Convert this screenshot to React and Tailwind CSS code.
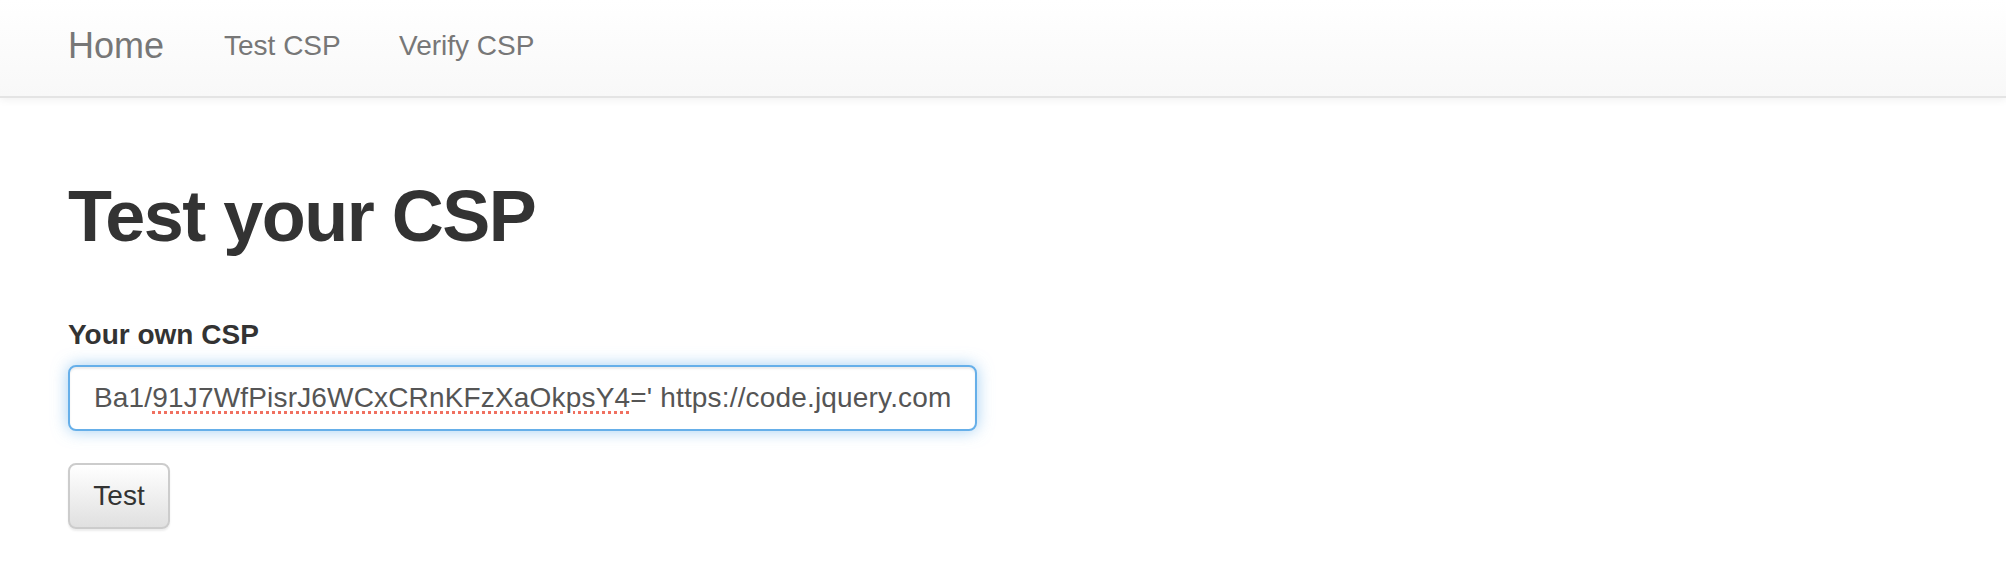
import React from 'react';

const font = { fontFamily: '"Liberation Sans", Arial, sans-serif' };

function Navbar() {
    return (
        <nav className="h-[98px] bg-gradient-to-b from-white to-[#f8f8f8] border-b-2 border-[#e4e4e4] shadow-[0_2px_8px_rgba(0,0,0,0.06)]">
            <div className="flex items-start pl-[68px] pt-[26px]">
                <a className="w-[156px] text-[36px] leading-[40px] text-[#777]">Home</a>
                <a className="w-[175px] text-[28px] leading-[40px] text-[#777]">Test CSP</a>
                <a className="text-[28px] leading-[40px] text-[#777]">Verify CSP</a>
            </div>
        </nav>
    );
}

export default function App() {
    return (
        <div className="min-h-screen bg-white" style={font}>
            <Navbar />
            <main className="px-[68px]">
                <h1 className="mt-[79px] text-[72px] leading-[1.1] font-bold text-[#333] tracking-[-1.5px]">Test your CSP</h1>

                <form className="mt-[59px]">
                    <label className="block text-[28px] leading-[40px] font-bold text-[#333] mb-[10px]">Your own CSP</label>
                    <div className="w-[909px] h-[66px] flex items-center px-[24px] border-2 border-[#66afe9] rounded-[8px] bg-white overflow-hidden whitespace-nowrap shadow-[inset_0_2px_2px_rgba(0,0,0,0.075),0_0_16px_rgba(102,175,233,0.6)]">
                        <span className="text-[28px] leading-[40px] text-[#555] tracking-[0.17px]">
                            Ba1/<span className="underline decoration-dotted decoration-[#f07060] decoration-[3px] underline-offset-[4px]">91J7WfPisrJ6WCxCRnKFzXaOkpsY4</span>=' https://code.jquery.com
                        </span>
                    </div>

                    <button type="button" className="mt-[32px] w-[102px] h-[66px] flex items-center justify-center text-[28px] leading-[40px] text-[#333] border-2 border-[#ccc] rounded-[8px] bg-gradient-to-b from-white to-[#e0e0e0] shadow-[0_2px_2px_rgba(0,0,0,0.075)]">
                        Test
                    </button>
                </form>
            </main>
        </div>
    );
}
